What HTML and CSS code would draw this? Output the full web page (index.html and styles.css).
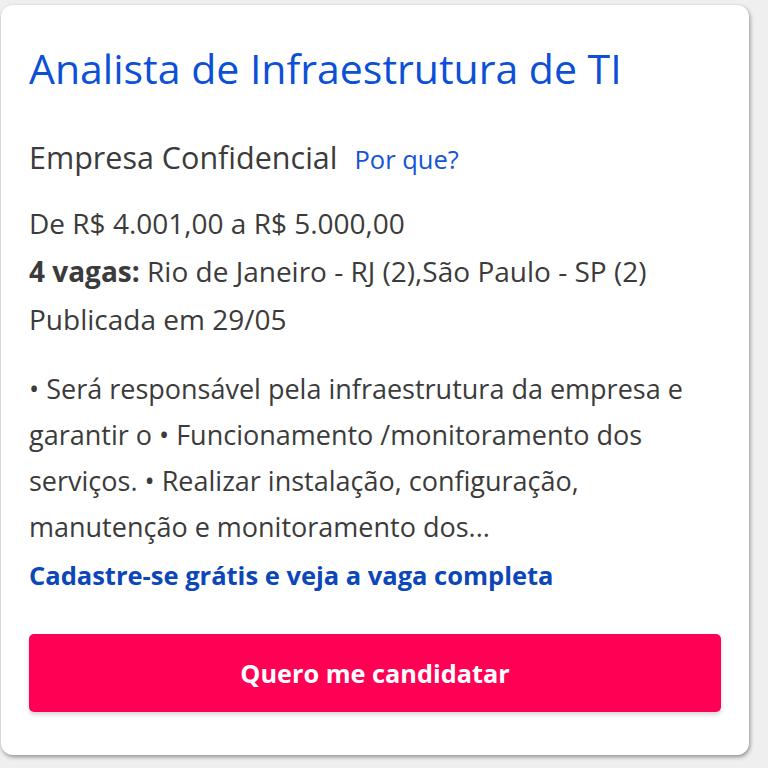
FILE: index.html
```html
<!DOCTYPE html>
<html lang="pt-BR">
<head>
<meta charset="utf-8">
<title>Vaga</title>
<link rel="stylesheet" href="styles.css">
</head>
<body>
<div class="card">
  <h1 class="title">Analista de Infraestrutura de TI</h1>
  <div class="company">
    <span class="company-name">Empresa Confidencial</span>
    <a class="why" href="#">Por que?</a>
  </div>
  <div class="meta">
    <p class="meta-line">De R$ 4.001,00 a R$ 5.000,00</p>
    <p class="meta-line"><strong>4 vagas:</strong> Rio de Janeiro - RJ (2),São Paulo - SP (2)</p>
    <p class="meta-line">Publicada em 29/05</p>
  </div>
  <p class="desc">• Será responsável pela infraestrutura da empresa e garantir o • Funcionamento /monitoramento dos serviços. • Realizar instalação, configuração, manutenção e monitoramento dos...</p>
  <a class="signup" href="#">Cadastre-se grátis e veja a vaga completa</a>
  <button class="apply" type="button">Quero me candidatar</button>
</div>
</body>
</html>
```

FILE: styles.css
```css
html, body {
  margin: 0;
  padding: 0;
  background: #efefef;
}
body {
  font-family: "Open Sans", "Noto Sans", sans-serif;
  color: #3b3b3b;
  padding: 5px 19px 13px 1px;
}
.card {
  background: #fff;
  border-radius: 12px;
  box-shadow: 1px 2px 4px rgba(0,0,0,0.4);
  padding: 38px 28px 43px 28px;
  display: flex;
  flex-direction: column;
  height: 750px;
  box-sizing: border-box;
}
.title {
  margin: 0;
  font-size: 41px;
  line-height: 50px;
  font-weight: 400;
  color: #0b50d6;
}
.company {
  margin-top: 44px;
  display: flex;
  align-items: baseline;
  gap: 17px;
  line-height: 40px;
}
.company-name {
  font-size: 30.5px;
}
.why {
  font-size: 25.5px;
  color: #1554d6;
  text-decoration: none;
}
.meta {
  margin-top: 20px;
}
.meta-line {
  margin: 0;
  font-size: 28px;
  line-height: 48px;
}
.meta-line strong {
  font-weight: 700;
}
.desc {
  margin: 23px 0 0;
  font-size: 27px;
  line-height: 46px;
}
.signup {
  font-size: 25.5px;
  font-weight: 700;
  line-height: 50px;
  color: #0b47b8;
  text-decoration: none;
}
.apply {
  margin-top: auto;
  height: 78px;
  border: none;
  border-radius: 5px;
  background: #ff0055;
  color: #fff;
  font-family: inherit;
  font-size: 25.3px;
  font-weight: 700;
  box-shadow: 0 3px 4px rgba(0,0,0,0.15);
}
```
